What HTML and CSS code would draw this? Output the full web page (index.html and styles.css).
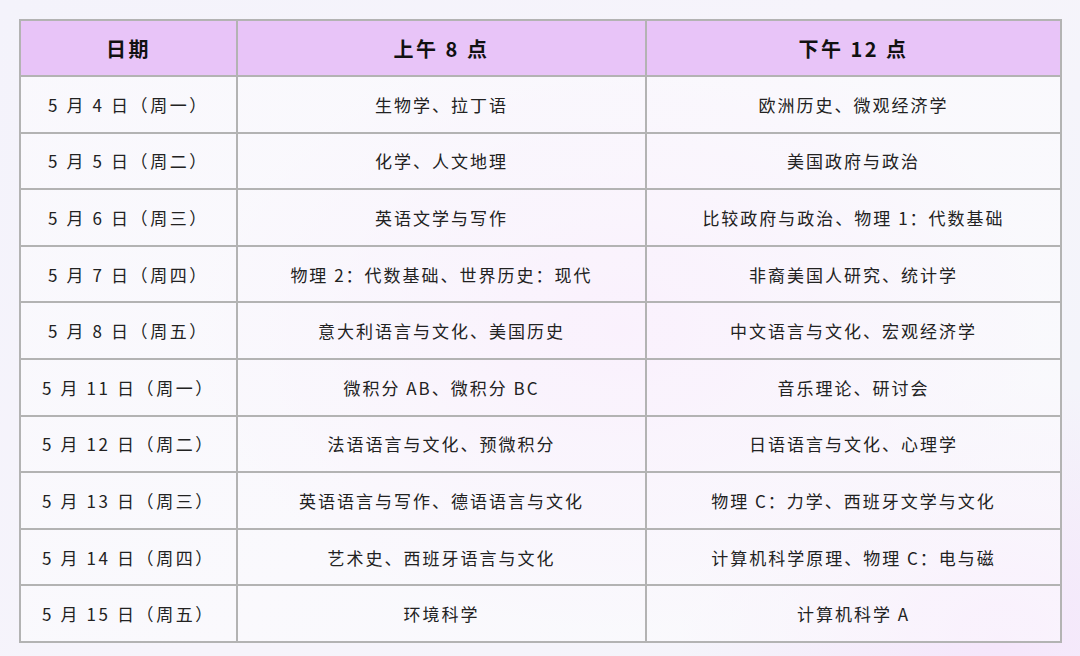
FILE: index.html
```html
<!DOCTYPE html>
<html lang="zh-CN">
<head>
<meta charset="utf-8">
<link rel="stylesheet" href="styles.css">
</head>
<body>
<div class="page">
  <div class="schedule">
    <div class="cell head">日期</div>
    <div class="cell head">上午 8 点</div>
    <div class="cell head">下午 12 点</div>

    <div class="cell date">5 月 4 日（周一）</div>
    <div class="cell">生物学、拉丁语</div>
    <div class="cell">欧洲历史、微观经济学</div>

    <div class="cell date">5 月 5 日（周二）</div>
    <div class="cell">化学、人文地理</div>
    <div class="cell">美国政府与政治</div>

    <div class="cell date">5 月 6 日（周三）</div>
    <div class="cell">英语文学与写作</div>
    <div class="cell">比较政府与政治、物理 1：代数基础</div>

    <div class="cell date">5 月 7 日（周四）</div>
    <div class="cell">物理 2：代数基础、世界历史：现代</div>
    <div class="cell">非裔美国人研究、统计学</div>

    <div class="cell date">5 月 8 日（周五）</div>
    <div class="cell">意大利语言与文化、美国历史</div>
    <div class="cell">中文语言与文化、宏观经济学</div>

    <div class="cell date">5 月 11 日（周一）</div>
    <div class="cell">微积分 AB、微积分 BC</div>
    <div class="cell">音乐理论、研讨会</div>

    <div class="cell date">5 月 12 日（周二）</div>
    <div class="cell">法语语言与文化、预微积分</div>
    <div class="cell">日语语言与文化、心理学</div>

    <div class="cell date">5 月 13 日（周三）</div>
    <div class="cell">英语语言与写作、德语语言与文化</div>
    <div class="cell">物理 C：力学、西班牙文学与文化</div>

    <div class="cell date">5 月 14 日（周四）</div>
    <div class="cell">艺术史、西班牙语言与文化</div>
    <div class="cell">计算机科学原理、物理 C：电与磁</div>

    <div class="cell date">5 月 15 日（周五）</div>
    <div class="cell">环境科学</div>
    <div class="cell">计算机科学 A</div>
  </div>
</div>
</body>
</html>
```

FILE: styles.css
```css
html, body {
  margin: 0;
  padding: 0;
}
body {
  width: 1080px;
  height: 656px;
  overflow: hidden;
  font-family: "Noto Sans CJK SC", "Noto Sans", sans-serif;
  background:
    radial-gradient(ellipse 420px 300px at 620px 330px, #f6e6fb, rgba(246, 230, 251, 0) 100%),
    radial-gradient(ellipse 320px 260px at 1000px 640px, #f5e6fb, rgba(245, 230, 251, 0) 100%),
    linear-gradient(135deg, #f4f3fb 0%, #f6f4fb 50%, #f3f4fa 100%);
  background-attachment: fixed;
}
.page {
  padding: 19px 0 0 19px;
}
.schedule {
  width: 1043px;
  display: grid;
  grid-template-columns: 215px 407px 413px;
  grid-template-rows: 54px repeat(10, 54.6px);
  gap: 2px;
  padding: 2px;
  box-sizing: border-box;
  background: #b3b3b3;
}
.cell {
  display: flex;
  align-items: center;
  justify-content: center;
  font-size: 17px;
  letter-spacing: 2px;
  color: #222;
  background:
    linear-gradient(rgba(255, 255, 255, 0.45), rgba(255, 255, 255, 0.45)),
    radial-gradient(ellipse 420px 300px at 620px 330px, #f6e6fb, rgba(246, 230, 251, 0) 100%),
    radial-gradient(ellipse 320px 260px at 1000px 640px, #f5e6fb, rgba(245, 230, 251, 0) 100%),
    linear-gradient(135deg, #f4f3fb 0%, #f6f4fb 50%, #f3f4fa 100%);
  background-attachment: fixed;
  white-space: nowrap;
}
.cell.date {
  letter-spacing: 2.6px;
}
.cell.head {
  background: #e8c4f8;
  font-weight: 700;
  font-size: 20px;
  letter-spacing: 2.5px;
  color: #111;
}
```
